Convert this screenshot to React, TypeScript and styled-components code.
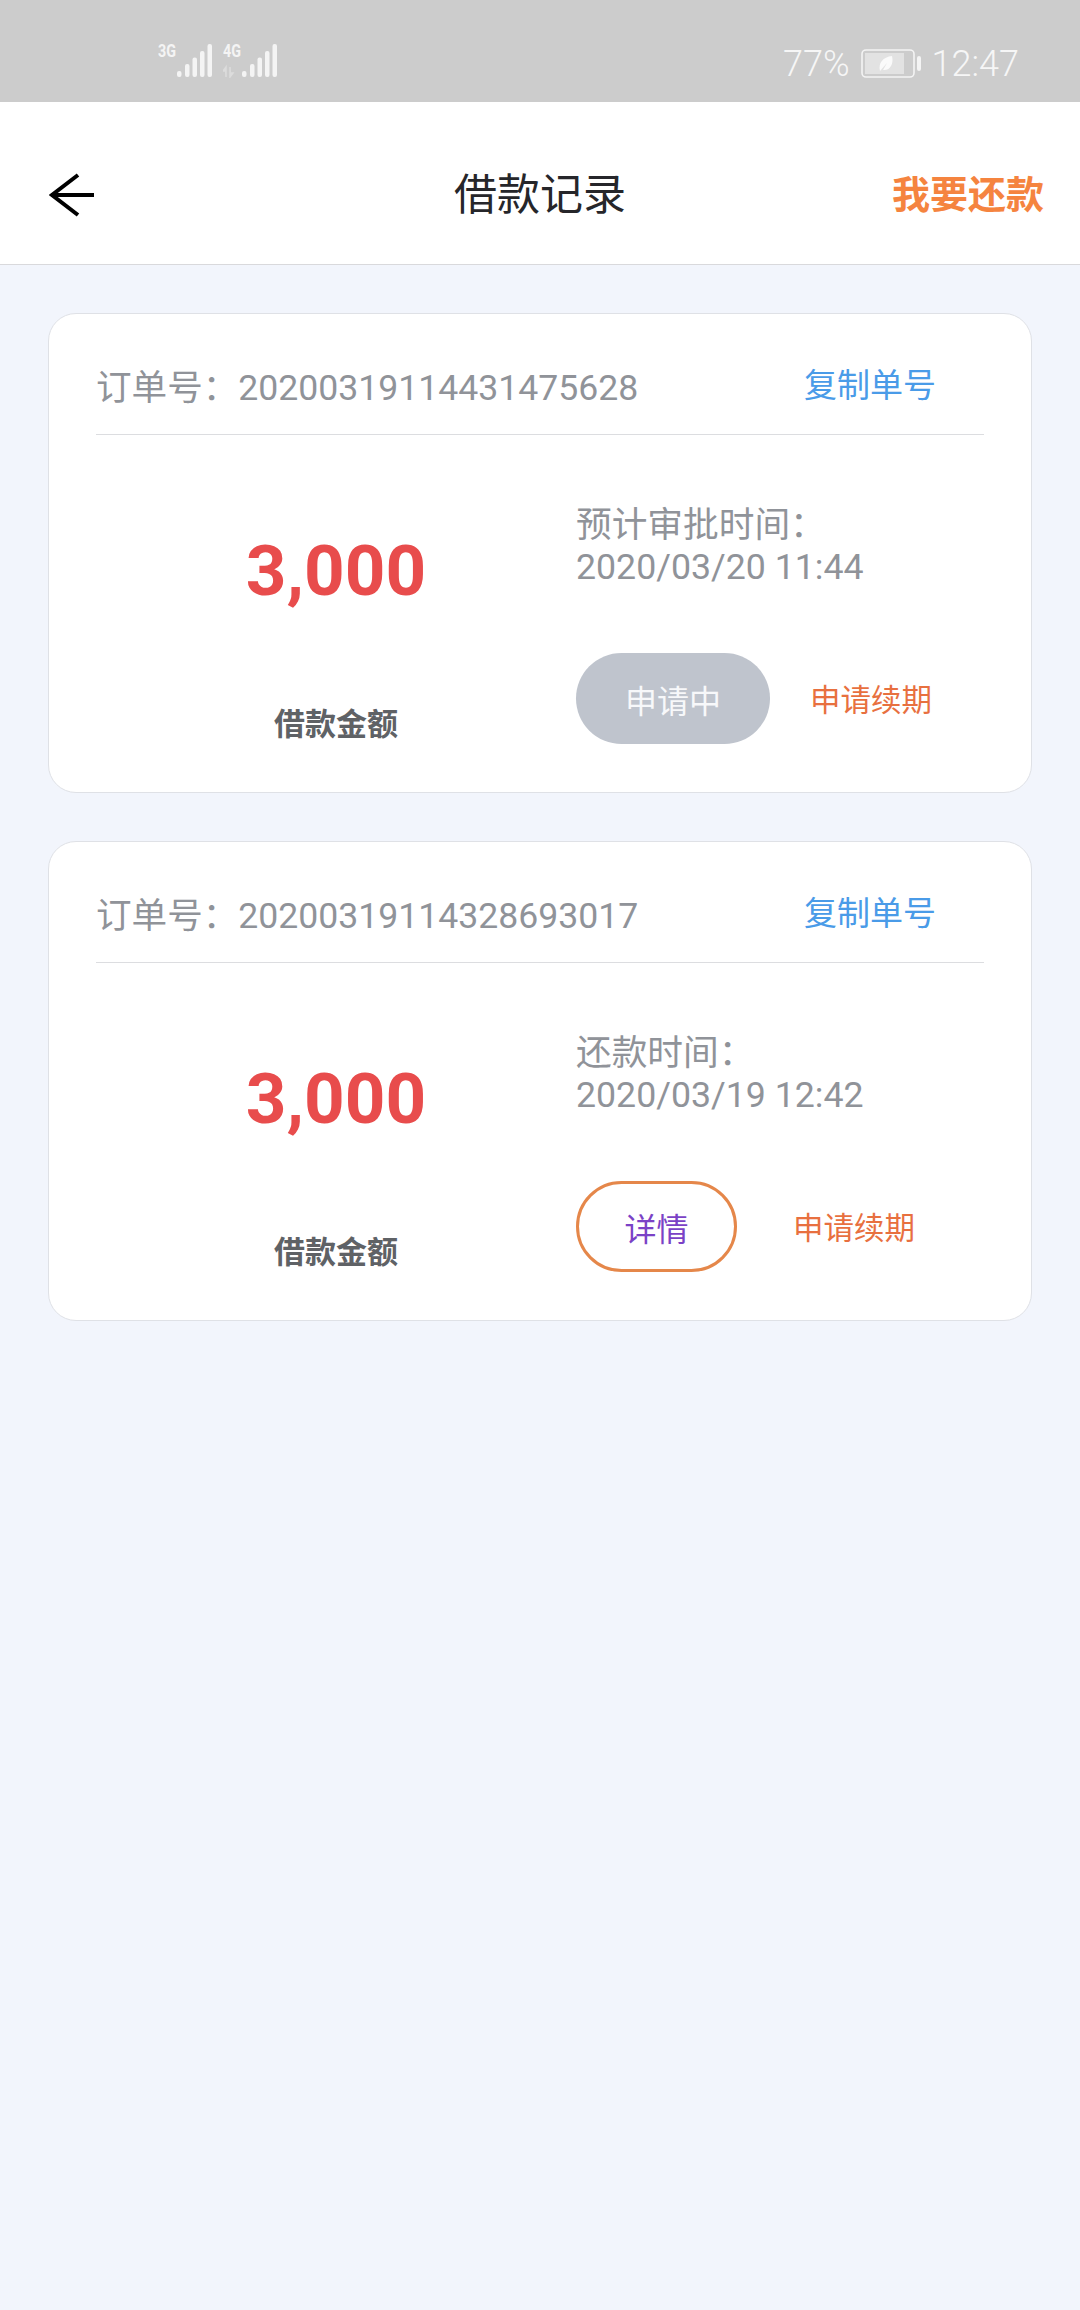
import React from "react";
import styled, { createGlobalStyle } from "styled-components";

const GlobalStyle = createGlobalStyle`
    html, body {
        margin: 0;
        padding: 0;
        background: #f2f5fc;
        font-family: Roboto, "Noto Sans CJK SC", sans-serif;
    }
`;

interface Order {
    id: string;
    timeLabel: string;
    time: string;
    status: string;
    pending: boolean;
}

const ORDERS: Order[] = [
    {
        id: "20200319114431475628",
        timeLabel: "预计审批时间：",
        time: "2020/03/20 11:44",
        status: "申请中",
        pending: true,
    },
    {
        id: "20200319114328693017",
        timeLabel: "还款时间：",
        time: "2020/03/19 12:42",
        status: "详情",
        pending: false,
    },
];

const SignalBars: React.FC<{ label: string; arrows?: boolean }> = ({ label, arrows }) => (
    <svg width="58" height="40" viewBox="0 -6 58 40" fill="#f4f4f4">
        <text
            x="0"
            y="13"
            fontFamily="Roboto"
            fontWeight="700"
            fontSize="19"
            textLength="18"
            lengthAdjust="spacingAndGlyphs"
        >
            {label}
        </text>
        {arrows && <path d="M3 33V23l-3 4h2M7 23v10l3-4H8" fill="#dcdcdc" stroke="#dcdcdc" strokeWidth="1.5" />}
        <rect x="19" y="27" width="4.5" height="6" rx="2" />
        <rect x="27" y="20" width="4.5" height="13" rx="2" />
        <rect x="34.5" y="13.5" width="4.5" height="19.5" rx="2" />
        <rect x="42" y="7" width="4.5" height="26" rx="2" />
        <rect x="49.5" y="0" width="4.5" height="33" rx="2" />
    </svg>
);

const Battery = () => (
    <svg width="62" height="30" viewBox="0 0 62 30">
        <rect x="1" y="1" width="52" height="27" rx="4" fill="none" stroke="#f4f4f4" strokeWidth="1.6" />
        <rect x="4" y="4" width="39" height="21" fill="#e2e2e2" />
        <rect x="56" y="7" width="4" height="15" rx="2" fill="#f4f4f4" />
        <path d="M19 22c-2-8 3-14 12-15 2 8-2 15-9 14l4-7-7 8z" fill="#fafafa" />
    </svg>
);

const BackArrow = () => (
    <svg width="46" height="44" viewBox="0 0 46 44" fill="none" stroke="#000" strokeWidth="4">
        <path d="M45 22H4" />
        <path d="M29 2L3 22l26 20" />
    </svg>
);

const App: React.FC = () => {
    return (
        <Page>
            <GlobalStyle />
            <StatusBar>
                <Signals>
                    <SignalBars label="3G" />
                    <SignalBars label="4G" arrows />
                </Signals>
                <StatusRight>
                    <StatusText>77%</StatusText>
                    <Battery />
                    <Clock>12:47</Clock>
                </StatusRight>
            </StatusBar>
            <Header>
                <BackButton>
                    <BackArrow />
                </BackButton>
                <Title>借款记录</Title>
                <RepayLink>我要还款</RepayLink>
            </Header>
            <List>
                {ORDERS.map((order) => (
                    <Card key={order.id}>
                        <CardHead>
                            <OrderNo>订单号：{order.id}</OrderNo>
                            <CopyLink>复制单号</CopyLink>
                        </CardHead>
                        <CardBody>
                            <AmountColumn>
                                <Amount>3,000</Amount>
                                <AmountLabel>借款金额</AmountLabel>
                            </AmountColumn>
                            <InfoColumn>
                                <InfoLine>{order.timeLabel}</InfoLine>
                                <InfoLine>{order.time}</InfoLine>
                                <Actions>
                                    <StatusButton pending={order.pending}>{order.status}</StatusButton>
                                    <RenewLink>申请续期</RenewLink>
                                </Actions>
                            </InfoColumn>
                        </CardBody>
                    </Card>
                ))}
            </List>
        </Page>
    );
};

const Page = styled.div`
    width: 1080px;
    height: 2310px;
    overflow: hidden;
    background: #f2f5fc;
`;

const StatusBar = styled.div`
    height: 102px;
    box-sizing: border-box;
    background: #cccccc;
    padding: 38px 61px 0 158px;
    display: flex;
    justify-content: space-between;
    align-items: flex-start;
`;

const Signals = styled.div`
    display: flex;
    gap: 7px;
`;

const StatusRight = styled.div`
    display: flex;
    align-items: center;
    gap: 11px;
    color: #f6f6f6;
    padding-top: 6px;
`;

const StatusText = styled.span`
    font-size: 36px;
    font-weight: 300;
    line-height: 40px;
`;

const Clock = styled(StatusText)`
    margin-left: -2px;
`;

const Header = styled.div`
    height: 163px;
    box-sizing: border-box;
    background: #fff;
    border-bottom: 1px solid #d9d9dc;
    padding: 24px 36px 0;
    display: grid;
    grid-template-columns: 1fr auto 1fr;
    align-items: center;
`;

const BackButton = styled.div`
    padding-left: 13px;
    display: flex;
`;

const Title = styled.div`
    font-size: 43px;
    line-height: 56px;
    color: #26262a;
`;

const RepayLink = styled.div`
    justify-self: end;
    font-size: 38px;
    font-weight: 700;
    line-height: 50px;
    color: #f5843f;
`;

const List = styled.div`
    padding: 48px 48px 0;
    display: flex;
    flex-direction: column;
    gap: 48px;
`;

const Card = styled.div`
    box-sizing: border-box;
    height: 480px;
    background: #fff;
    border: 1px solid #dfe1e6;
    border-radius: 28px;
    padding: 0 47px;
`;

const CardHead = styled.div`
    height: 121px;
    box-sizing: border-box;
    border-bottom: 1px solid #dcdde0;
    display: flex;
    align-items: center;
    justify-content: space-between;
    padding-right: 48px;
`;

const OrderNo = styled.div`
    font-size: 35.6px;
    line-height: 50px;
    color: #909399;
    padding-top: 27px;
`;

const CopyLink = styled.div`
    font-size: 33px;
    line-height: 44px;
    color: #4a9be8;
    padding-top: 24px;
`;

const CardBody = styled.div`
    display: grid;
    grid-template-columns: 480px 1fr;
`;

const AmountColumn = styled.div`
    display: flex;
    flex-direction: column;
    align-items: center;
    padding-top: 94px;
`;

const Amount = styled.div`
    font-size: 71px;
    font-weight: 700;
    line-height: 84px;
    color: #e84c4c;
`;

const AmountLabel = styled.div`
    margin-top: 92px;
    font-size: 31px;
    font-weight: 700;
    line-height: 40px;
    color: #5f6266;
`;

const InfoColumn = styled.div`
    padding-top: 69px;
`;

const InfoLine = styled.div`
    font-size: 35.7px;
    line-height: 42px;
    color: #909399;
`;

const Actions = styled.div`
    margin-top: 65px;
    display: flex;
    align-items: center;
    gap: 40px;
`;

const StatusButton = styled.div<{ pending: boolean }>`
    box-sizing: border-box;
    height: 91px;
    width: ${({ pending }) => (pending ? "194px" : "161px")};
    border-radius: 46px;
    display: flex;
    align-items: center;
    justify-content: center;
    font-size: 32px;
    background: ${({ pending }) => (pending ? "#bfc4cd" : "#fff")};
    color: ${({ pending }) => (pending ? "#f7f8fa" : "#7b42c6")};
    border: ${({ pending }) => (pending ? "none" : "3px solid #e5874a")};
    margin-right: ${({ pending }) => (pending ? "0" : "16px")};
`;

const RenewLink = styled.div`
    font-size: 30.5px;
    line-height: 40px;
    color: #e8703f;
    padding-top: 4px;
`;

export default App;
